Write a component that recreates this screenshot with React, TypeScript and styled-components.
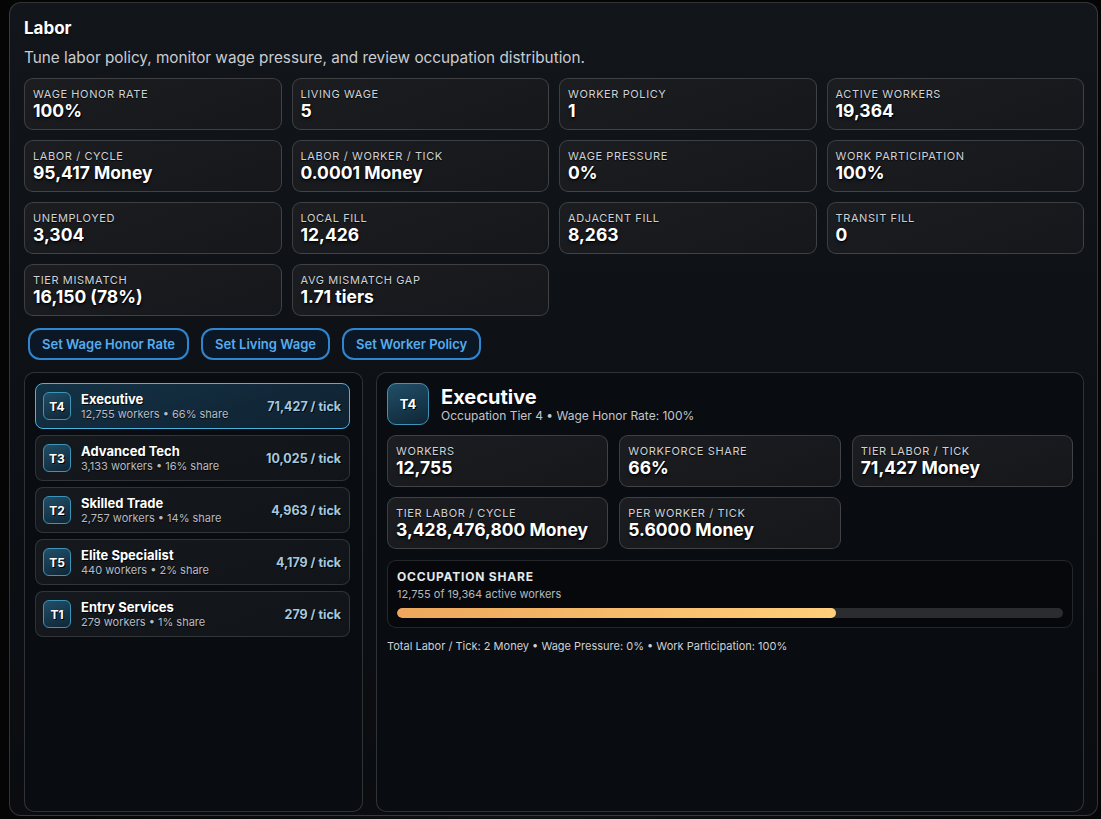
import React from "react";
import styled, { createGlobalStyle, css } from "styled-components";

const Global = createGlobalStyle`
  html, body { margin: 0; padding: 0; background: #060708; }
  body {
    font-family: Inter, "Noto Sans", "Liberation Sans", sans-serif;
    color: #fff;
    -webkit-font-smoothing: antialiased;
  }
  * { box-sizing: border-box; }
`;

const Page = styled.div`
  padding: 2px 3px 3px 9px;
  background: radial-gradient(ellipse at 50% 100%, #111214 0%, #050506 70%);
  height: 819px;
`;

const Panel = styled.section`
  height: 814px;
  border: 1px solid rgba(255, 255, 255, 0.16);
  border-radius: 12px;
  background: linear-gradient(180deg, #12151a 0%, #0c0f13 60%, #0a0c10 100%);
  padding: 14px 13px 3px 14px;
  display: flex;
  flex-direction: column;
`;

const Title = styled.h2`
  margin: 0;
  font-size: 17px;
  line-height: 22px;
  font-weight: 700;
  text-shadow: 0 1px 2px rgba(0, 0, 0, 0.9);
`;

const Subtitle = styled.p`
  margin: 9px 0 10px;
  font-size: 15.3px;
  line-height: 20px;
  color: #c9ccd1;
`;

const StatGrid = styled.div<{ $cols: number; $gap: number; $rowGap?: number }>`
  display: grid;
  grid-template-columns: repeat(${(p) => p.$cols}, 1fr);
  column-gap: ${(p) => p.$gap}px;
  row-gap: ${(p) => p.$rowGap ?? p.$gap}px;
`;

const Card = styled.div`
  height: 52px;
  border: 1px solid rgba(255, 255, 255, 0.17);
  border-radius: 9px;
  background: linear-gradient(160deg, #1b1d21 0%, #15171b 100%);
  padding: 8px 8px;
  display: flex;
  flex-direction: column;
`;

const Label = styled.div`
  font-size: 11px;
  line-height: 14px;
  letter-spacing: 0.6px;
  text-transform: uppercase;
  color: #cfd2d6;
  text-shadow: 0 1px 1px rgba(0, 0, 0, 0.8);
`;

const Value = styled.div`
  font-size: 17.5px;
  line-height: 20px;
  font-weight: 700;
  color: #fff;
  text-shadow: 1px 1px 0 rgba(0, 0, 0, 0.9), 0 2px 3px rgba(0, 0, 0, 0.6);
`;

const Actions = styled.div`
  display: flex;
  gap: 12px;
  margin: 12px 0 12px;
  padding-left: 4px;
`;

const Button = styled.button`
  height: 32px;
  padding: 0 12px;
  border: 2px solid #2f86cf;
  border-radius: 12px;
  background: #0b1724;
  color: #56acef;
  font-family: inherit;
  font-size: 13px;
  font-weight: 600;
  cursor: pointer;
`;

const Split = styled.div`
  flex: 1;
  display: grid;
  grid-template-columns: 339px 1fr;
  gap: 13px;
  min-height: 0;
`;

const SubPanel = styled.div`
  border: 1px solid rgba(255, 255, 255, 0.16);
  border-radius: 10px;
  background: #090c10;
`;

const List = styled(SubPanel)`
  padding: 10px 12px 10px 10px;
  display: flex;
  flex-direction: column;
  gap: 6px;
`;

const Item = styled.div<{ $active?: boolean }>`
  height: 46px;
  flex: none;
  border-radius: 8px;
  padding: 0 8px 0 7px;
  display: flex;
  align-items: center;
  gap: 10px;
  border: 1px solid rgba(255, 255, 255, 0.13);
  background: linear-gradient(160deg, #15181d, #111418);
  ${(p) =>
    p.$active &&
    css`
      border-color: #4cb2dc;
      background: linear-gradient(160deg, #143246 0%, #0f2130 100%);
    `}
`;

const Badge = styled.div<{ $size: number }>`
  width: ${(p) => p.$size}px;
  height: ${(p) => p.$size}px;
  flex: none;
  border-radius: ${(p) => (p.$size > 30 ? 9 : 6)}px;
  border: 1px solid #3d94b8;
  background: linear-gradient(160deg, #214f68 0%, #0f2636 100%);
  display: flex;
  align-items: center;
  justify-content: center;
  font-size: ${(p) => (p.$size > 30 ? 13 : 12)}px;
  font-weight: 700;
  color: #fff;
  text-shadow: 1px 1px 0 #000;
`;

const ItemText = styled.div`
  flex: 1;
  display: flex;
  flex-direction: column;
  min-width: 0;
`;

const ItemName = styled.div`
  font-size: 13px;
  line-height: 16px;
  font-weight: 700;
  text-shadow: 1px 1px 0 rgba(0, 0, 0, 0.9);
`;

const ItemSub = styled.div`
  font-size: 11px;
  line-height: 14px;
  color: #b8bcc2;
  text-shadow: 0 1px 1px rgba(0, 0, 0, 0.8);
`;

const ItemRate = styled.div`
  font-size: 12.5px;
  font-weight: 700;
  color: #a4c8df;
  text-shadow: 1px 1px 0 rgba(0, 0, 0, 0.9);
`;

const Detail = styled(SubPanel)`
  padding: 10px;
  display: flex;
  flex-direction: column;
`;

const Header = styled.div`
  display: flex;
  align-items: center;
  gap: 12px;
  margin-bottom: 10px;
`;

const HeaderTitle = styled.div`
  font-size: 20px;
  line-height: 22px;
  font-weight: 700;
  text-shadow: 1px 1px 0 rgba(0, 0, 0, 0.9);
`;

const HeaderSub = styled.div`
  font-size: 12px;
  line-height: 15px;
  color: #c2c6cc;
`;

const ShareBox = styled.div`
  margin-top: 11px;
  border: 1px solid rgba(255, 255, 255, 0.13);
  border-radius: 9px;
  background: #06080b;
  padding: 8px 9px 9px;
`;

const ShareTitle = styled.div`
  font-size: 12px;
  line-height: 15px;
  font-weight: 700;
  letter-spacing: 0.8px;
  color: #e6e8ea;
`;

const ShareSub = styled.div`
  font-size: 11px;
  line-height: 14px;
  color: #b4b8bd;
  margin: 3px 0 7px;
`;

const Track = styled.div`
  height: 10px;
  border-radius: 5px;
  background: #2a2c30;
  overflow: hidden;
`;

const Fill = styled.div`
  height: 100%;
  border-radius: 5px;
  background: linear-gradient(90deg, #eea75c 0%, #ffcf7b 100%);
`;

const Footnote = styled.div`
  margin-top: 11px;
  font-size: 11px;
  line-height: 14px;
  color: #cdd0d4;
`;

const stats: [string, string][] = [
  ["Wage Honor Rate", "100%"],
  ["Living Wage", "5"],
  ["Worker Policy", "1"],
  ["Active Workers", "19,364"],
  ["Labor / Cycle", "95,417 Money"],
  ["Labor / Worker / Tick", "0.0001 Money"],
  ["Wage Pressure", "0%"],
  ["Work Participation", "100%"],
  ["Unemployed", "3,304"],
  ["Local Fill", "12,426"],
  ["Adjacent Fill", "8,263"],
  ["Transit Fill", "0"],
  ["Tier Mismatch", "16,150 (78%)"],
  ["Avg Mismatch Gap", "1.71 tiers"],
];

const tiers = [
  { t: "T4", name: "Executive", sub: "12,755 workers • 66% share", rate: "71,427 / tick" },
  { t: "T3", name: "Advanced Tech", sub: "3,133 workers • 16% share", rate: "10,025 / tick" },
  { t: "T2", name: "Skilled Trade", sub: "2,757 workers • 14% share", rate: "4,963 / tick" },
  { t: "T5", name: "Elite Specialist", sub: "440 workers • 2% share", rate: "4,179 / tick" },
  { t: "T1", name: "Entry Services", sub: "279 workers • 1% share", rate: "279 / tick" },
];

const detailStats: [string, string][] = [
  ["Workers", "12,755"],
  ["Workforce Share", "66%"],
  ["Tier Labor / Tick", "71,427 Money"],
  ["Tier Labor / Cycle", "3,428,476,800 Money"],
  ["Per Worker / Tick", "5.6000 Money"],
];

export default function App() {
  const share = (12755 / 19364) * 100;
  return (
    <>
      <Global />
      <Page>
        <Panel>
          <Title>Labor</Title>
          <Subtitle>Tune labor policy, monitor wage pressure, and review occupation distribution.</Subtitle>
          <StatGrid $cols={4} $gap={10}>
            {stats.map(([l, v]) => (
              <Card key={l}>
                <Label>{l}</Label>
                <Value>{v}</Value>
              </Card>
            ))}
          </StatGrid>
          <Actions>
            <Button>Set Wage Honor Rate</Button>
            <Button>Set Living Wage</Button>
            <Button>Set Worker Policy</Button>
          </Actions>
          <Split>
            <List>
              {tiers.map((x, i) => (
                <Item key={x.t} $active={i === 0}>
                  <Badge $size={28}>{x.t}</Badge>
                  <ItemText>
                    <ItemName>{x.name}</ItemName>
                    <ItemSub>{x.sub}</ItemSub>
                  </ItemText>
                  <ItemRate>{x.rate}</ItemRate>
                </Item>
              ))}
            </List>
            <Detail>
              <Header>
                <Badge $size={42}>T4</Badge>
                <div>
                  <HeaderTitle>Executive</HeaderTitle>
                  <HeaderSub>Occupation Tier 4 • Wage Honor Rate: 100%</HeaderSub>
                </div>
              </Header>
              <StatGrid $cols={3} $gap={11} $rowGap={10}>
                {detailStats.map(([l, v]) => (
                  <Card key={l}>
                    <Label>{l}</Label>
                    <Value>{v}</Value>
                  </Card>
                ))}
              </StatGrid>
              <ShareBox>
                <ShareTitle>OCCUPATION SHARE</ShareTitle>
                <ShareSub>12,755 of 19,364 active workers</ShareSub>
                <Track>
                  <Fill style={{ width: `${share}%` }} />
                </Track>
              </ShareBox>
              <Footnote>Total Labor / Tick: 2 Money • Wage Pressure: 0% • Work Participation: 100%</Footnote>
            </Detail>
          </Split>
        </Panel>
      </Page>
    </>
  );
}
